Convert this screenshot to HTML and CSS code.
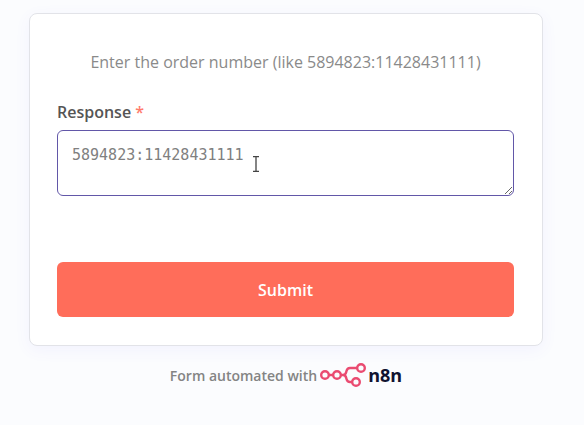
FILE: index.html
```html
<!DOCTYPE html>
<html lang="en">
<head>
    <meta charset="UTF-8">
    <meta name="viewport" content="width=device-width, initial-scale=1.0">
    <title>Order form</title>
    <link rel="stylesheet" href="styles.css">
</head>
<body>
    <main class="container">
        <form class="card">
            <p class="form-header">Enter the order number (like 5894823:11428431111)</p>

            <div class="form-group">
                <label class="form-label" for="response">Response <span class="required">*</span></label>
                <div class="input-box">
                    <textarea id="response" class="form-input" placeholder="5894823:11428431111" required></textarea>
                    <svg class="cursor" width="8" height="16" viewBox="0 0 8 16" aria-hidden="true">
                        <path d="M1 .5h2.500l.5.5.5-.5H7M1 15.500h2.500L4 15l.5.5H7M4 1v14" fill="none" stroke="#444" stroke-width="1.3"/>
                    </svg>
                </div>
            </div>

            <button class="submit-btn" type="submit">Submit</button>
        </form>

        <footer class="n8n-link">
            <span>Form automated with</span>
            <a href="#" class="logo">
                <svg width="46" height="24" viewBox="0 0 46 24" aria-hidden="true">
                    <g fill="none" stroke="#ea4b71" stroke-width="2.4">
                        <circle cx="5" cy="12" r="3.800"/>
                        <circle cx="17" cy="12" r="3.800"/>
                        <circle cx="41" cy="5" r="3.800"/>
                        <circle cx="36" cy="19" r="3.800"/>
                        <path d="M9 12h4M21 12h2c3 0 3-2 3.500-4s1.500-3 3.500-3h7M23 12c3 0 3 2 3.500 4s1.500 3 3.500 3h2"/>
                    </g>
                </svg>
                <span>n8n</span>
            </a>
        </footer>
    </main>
</body>
</html>
```
FILE: styles.css
```css
* {
    box-sizing: border-box;
}

body {
    margin: 0;
    padding: 13px 41px 24px 29px;
    font-family: "Open Sans", sans-serif;
    background-color: #fbfcfe;
}

.container {
    display: flex;
    flex-direction: column;
    gap: 17px;
}

.card {
    padding: 36px 28px 28px 27px;
    background-color: #fff;
    border: 1px solid #e2e3e8;
    border-radius: 8px;
    box-shadow: 0 4px 16px rgba(99, 77, 255, 0.06);
}

.form-header {
    margin: 0 0 26px;
    font-size: 16px;
    line-height: 24px;
    text-align: center;
    color: #8a8a8a;
}

.form-group {
    margin-bottom: 66px;
}

.form-label {
    display: block;
    margin-bottom: 6px;
    font-size: 16px;
    font-weight: 600;
    line-height: 24px;
    color: #555;
}

.required {
    color: #ff7b6c;
}

.input-box {
    position: relative;
}

.form-input {
    display: block;
    width: 100%;
    height: 66px;
    padding: 14px;
    font-family: "DejaVu Sans Mono", monospace;
    font-size: 15px;
    line-height: 20px;
    color: #555;
    border: 1px solid #6257a8;
    border-radius: 6px;
    outline: none;
    resize: vertical;
}

.form-input::placeholder {
    color: #808080;
}

/* text pointer resting over the field */
.cursor {
    position: absolute;
    top: 26px;
    left: 195px;
}

.submit-btn {
    display: block;
    width: 100%;
    height: 55px;
    font-family: inherit;
    font-size: 16px;
    font-weight: 600;
    color: #fff;
    background-color: #ff6d5a;
    border: none;
    border-radius: 6px;
    cursor: pointer;
}

.n8n-link {
    display: flex;
    justify-content: center;
    align-items: center;
    gap: 3px;
    font-size: 14px;
    font-weight: 600;
    color: #848484;
}

.logo {
    display: flex;
    align-items: center;
    gap: 2px;
    font-size: 18px;
    font-weight: 700;
    line-height: 24px;
    color: #101330;
    text-decoration: none;
}
```
